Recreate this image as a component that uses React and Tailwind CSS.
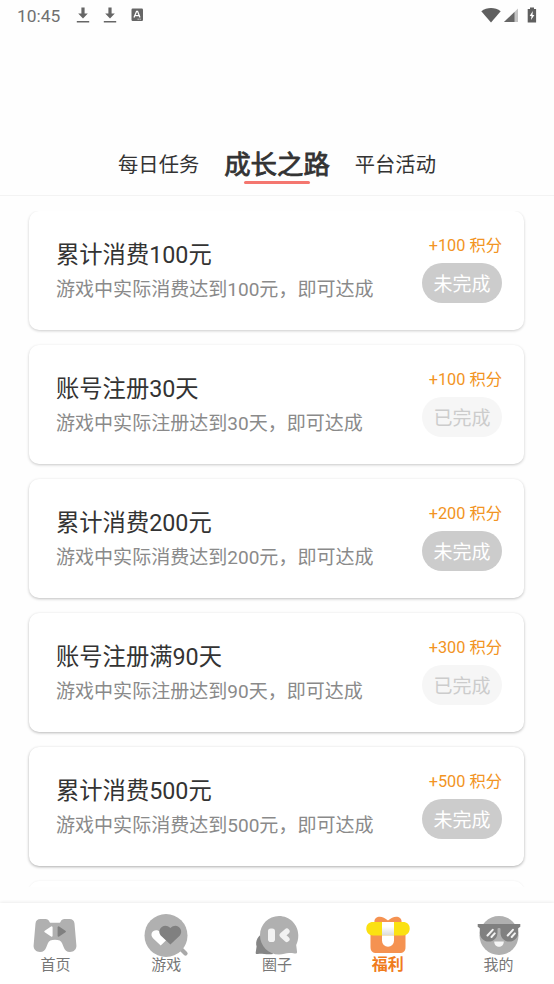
import { useState } from 'react';

const tabs = ['每日任务', '成长之路', '平台活动'];

const tasks = [
  { id: 1, title: '累计消费100元', desc: '游戏中实际消费达到100元，即可达成', points: 100, done: false, shadow: 'shadow-[0_1px_3px_rgba(0,0,0,0.2)]' },
  { id: 2, title: '账号注册30天', desc: '游戏中实际注册达到30天，即可达成', points: 100, done: true, shadow: 'shadow-[0_1px_3px_rgba(0,0,0,0.22)]' },
  { id: 3, title: '累计消费200元', desc: '游戏中实际消费达到200元，即可达成', points: 200, done: false, shadow: 'shadow-[0_1px_3px_rgba(0,0,0,0.25)]' },
  { id: 4, title: '账号注册满90天', desc: '游戏中实际注册达到90天，即可达成', points: 300, done: true, shadow: 'shadow-[0_1px_3px_rgba(0,0,0,0.28)]' },
  { id: 5, title: '累计消费500元', desc: '游戏中实际消费达到500元，即可达成', points: 500, done: false, shadow: 'shadow-[0_1px_3px_rgba(0,0,0,0.32)]' },
];

const DownloadIcon = () => (
  <svg width="14" height="18" viewBox="0 0 14 18" fill="#666">
    <path d="M5.4 0.5h3.2v6h3.2L7 11.6 2.2 6.500h3.200z" />
    <path d="M0.800 14h12.400v1.500H0.800z" />
  </svg>
);

const StatusBar = () => (
  <div className="flex h-8 shrink-0 items-center justify-between pl-[17px] pr-[17px] text-[#707070]">
    <div className="flex items-center">
      <span className="w-[59px] text-[17.4px] leading-8">10:45</span>
      <DownloadIcon />
      <span className="w-[13px]" />
      <DownloadIcon />
      <svg className="mb-[2px] ml-[14px]" width="13" height="14" viewBox="0 0 13 14">
        <rect x="0.5" y="0.5" width="11.5" height="12.5" rx="1.2" fill="#666" />
        <path d="M3 9.5 5.6 3.3h1L9 9.5M4 7.7h4" fill="none" stroke="#fff" strokeWidth="1.3" />
        <path d="M6.5 11.2h3.8" stroke="#ddd" strokeWidth="0.9" strokeDasharray="1.4 0.6" />
      </svg>
    </div>
    <div className="flex items-center pb-[2px]">
      <svg width="20" height="16" viewBox="0 0 20 16" fill="#5f5f5f">
        <path d="M0.300 4.300C6 0 14 0 19.700 4.300L10 15.500z" />
      </svg>
      <svg className="ml-[3px]" width="14" height="15" viewBox="0 0 14 15">
        <path d="M0 14 14 0.5V14z" fill="#c4c4c4" />
        <path d="M0 14 10.500 3.900V14z" fill="#666" />
      </svg>
      <svg className="ml-[9px]" width="10" height="16" viewBox="0 0 10 16">
        <path d="M3 0.5h4v1.400h2.100v13.600H0.700V1.900H3z" fill="#5f5f5f" />
        <path d="M5.800 4 2.700 9.100h1.800L4 13l3.400-5H5.500z" fill="#fff" />
      </svg>
    </div>
  </div>
);

const TaskCard = ({ task }) => (
  <div
    className={`flex h-[119px] shrink-0 justify-between rounded-[10px] bg-white pl-[27px] pr-[22px] ${task.shadow}`}
  >
    <div className="pt-[27px]">
      <h3 className="text-[23.3px] leading-[34px] text-[#333]">{task.title}</h3>
      <p className="mt-px text-[19.05px] leading-[34px] text-[#8a8a8a]">{task.desc}</p>
    </div>
    <div className="flex flex-col items-end pt-[23px]">
      <span className="text-[16.3px] leading-[24px] text-[#f29423]">+{task.points} 积分</span>
      <button
        type="button"
        className={`mt-[5px] h-10 w-20 rounded-full pt-px text-[19px] leading-[41px] ${
          task.done ? 'bg-[#f6f6f6] text-[#ccc]' : 'bg-[#ccc] text-white'
        }`}
      >
        {task.done ? '已完成' : '未完成'}
      </button>
    </div>
  </div>
);

const HomeIcon = () => (
  <svg width="46" height="44" viewBox="0 0 46 44">
    <path
      d="M8.5 5h5c2 0 3.2.9 3.8 2.6.3.9.8 1.2 1.6 1.2h8.2c.8 0 1.3-.3 1.6-1.2C29.300 5.900 30.500 5 32.500 5h5c3 0 4.700 1.600 5 4.500L44.400 31.500c.3 3.800-2.600 6.400-6.400 6.400-3.400 0-5.200-1.500-6.300-4.700l-1.500-3.800c-1-2.500-3.400-3.600-7.200-3.600s-6.200 1.100-7.200 3.600l-1.500 3.800C13.200 36.400 11.400 37.900 8 37.900c-3.800 0-6.700-2.600-6.400-6.400L3.500 9.500C3.800 6.600 5.500 5 8.500 5z"
      fill="#b0b0b0"
    />
    <path d="M19.600 13.300v8.400L13.300 17.500z" fill="#fff" stroke="#fff" strokeWidth="2" strokeLinejoin="round" />
    <path d="M26.600 13.300v8.400L32.900 17.500z" fill="#808080" stroke="#808080" strokeWidth="2" strokeLinejoin="round" />
  </svg>
);

const GameIcon = () => (
  <svg width="46" height="44" viewBox="0 0 46 44">
    <path d="M36 33l6.500 6.500" stroke="#a9a9a9" strokeWidth="4.200" strokeLinecap="round" />
    <circle cx="23" cy="21.500" r="21.500" fill="#b0b0b0" />
    <path d="M17.700 31.500 10 24.200c-4.500-5 2-11.300 7.700-5.800 5.500-5.500 12 .8 7.500 5.800z" fill="#fff" />
    <path d="M27.400 30.500 17.700 21.400C13.200 15.500 21 7.700 27.400 14c6.200-6.300 14 1.500 9.500 7.400z" fill="#808080" />
  </svg>
);

const CircleIcon = () => (
  <svg width="46" height="44" viewBox="0 0 46 44">
    <path d="M11 18C4 21 1 27 2.600 32.500L1.700 38.400c-.2 1.500.8 2 2.300 1.500 3-.8 8 .8 15 .1z" fill="#858585" />
    <path
      d="M25 2C14.500 2 6 10.500 6 21.200S14.500 40.500 25 40.500c4 0 7-1.200 10-1.500 3-.3 5 .5 6.500.5 1.200 0 1.700-.6 1.500-2l-.8-6.500c1.400-3 2.100-6 2.100-9.800C44.300 10.500 35.500 2 25 2z"
      fill="#b0b0b0"
    />
    <rect x="14" y="14.500" width="7" height="13.500" rx="2.800" fill="#f2f2f2" />
    <path d="M32.800 17.300 28.400 21.200l4.400 4" fill="none" stroke="#f2f2f2" strokeWidth="5.600" strokeLinecap="round" strokeLinejoin="round" />
  </svg>
);

const GiftIcon = () => (
  <svg width="46" height="44" viewBox="0 0 46 44">
    <defs>
      <linearGradient id="ribbon" x1="0" y1="0" x2="0" y2="1">
        <stop offset="0.350" stopColor="#fff" />
        <stop offset="1" stopColor="#d9d9d9" />
      </linearGradient>
    </defs>
    <path d="M10 10C7 3 16-.500 23 6.600 30-.500 39 3 36 10z" fill="#f59251" />
    <path d="M5.500 20h35v13c0 4-2 6-6 6h-23c-4 0-6-2-6-6z" fill="#f59251" />
    <path d="M8 8h30c4 0 6.700 2.600 6.700 6.500S42 21.500 38 21.500H8c-4 0-6.700-3.100-6.700-7S4 8 8 8z" fill="#fbe112" />
    <path d="M17 8h12v13.500H17z" fill="url(#ribbon)" />
    <path d="M17 21.500h12v5.200a6 6 0 0 1-12 0z" fill="#fff" />
  </svg>
);

const MineIcon = () => (
  <svg width="46" height="44" viewBox="0 0 46 44">
    <circle cx="23" cy="21.500" r="19.500" fill="#b0b0b0" />
    <path
      d="M1.700 10h42.600v2.800l-2.100 1.400v4.500c0 5-3.800 8.800-8.900 8.800s-8.800-3.700-8.800-8.800V15c0-1.300-3-1.300-3 0v3.700c0 5.100-3.700 8.800-8.800 8.800s-8.900-3.800-8.900-8.800v-4.500l-2.100-1.400V10z"
      fill="#808080"
    />
    <path
      d="M11.500 21.500l5.200-5.700M15.500 23l3.200-3.600M31.700 21.500l5.200-5.700M35.700 23l3.200-3.600"
      stroke="#f2f2f2"
      strokeWidth="2"
      strokeLinecap="round"
    />
    <path d="M18.200 27.500h9.600c0 7-9.600 7-9.600 0z" fill="#f5f5f5" />
  </svg>
);

const navItems = [
  { label: '首页', icon: HomeIcon },
  { label: '游戏', icon: GameIcon },
  { label: '圈子', icon: CircleIcon },
  { label: '福利', icon: GiftIcon },
  { label: '我的', icon: MineIcon },
];

const App = () => {
  const [activeTab, setActiveTab] = useState('成长之路');
  const [activeNav, setActiveNav] = useState('福利');

  return (
    <div className="flex h-[984px] w-[554px] flex-col overflow-hidden bg-[#fefefe] font-['Roboto','Noto_Sans_CJK_SC',sans-serif]">
      <StatusBar />

      {/* Tabs */}
      <div className="flex h-[164px] shrink-0 items-end justify-center gap-[25px] border-b border-[#f3f3f3] pb-[11px]">
        {tabs.map((tab) => (
          <button
            key={tab}
            type="button"
            onClick={() => setActiveTab(tab)}
            className="flex flex-col items-center text-[#333]"
          >
            <span
              className={
                tab === activeTab
                  ? 'pt-[2px] text-[26.4px] leading-[32px] [-webkit-text-stroke:0.8px_#333]'
                  : 'pt-[2px] text-[20.3px] leading-[32px]'
              }
            >
              {tab}
            </span>
            <span
              className={`h-[3px] w-[66px] rounded-full ${tab === activeTab ? 'bg-[#f4766f]' : 'bg-transparent'}`}
            />
          </button>
        ))}
      </div>

      {/* Task list */}
      <div className="mb-[16px] mt-[15px] flex min-h-0 flex-1 flex-col gap-[15px] overflow-hidden pl-[29px] pr-[30px]">
        {tasks.map((task) => (
          <TaskCard key={task.id} task={task} />
        ))}
        <div className="h-[119px] shrink-0 rounded-[10px] bg-white shadow-[0_0_2px_rgba(0,0,0,0.08)]" />
      </div>

      {/* Bottom navigation */}
      <nav className="z-10 grid h-[81px] shrink-0 grid-cols-5 bg-white shadow-[0_-1px_3px_rgba(0,0,0,0.07)]">
        {navItems.map(({ label, icon: Icon }) => (
          <button
            key={label}
            type="button"
            onClick={() => setActiveNav(label)}
            className="flex flex-col items-center pt-[11px]"
          >
            <Icon />
            <span
              className={
                label === activeNav
                  ? '-mt-[3px] text-[16px] font-bold leading-[20px] text-[#f07c1c]'
                  : '-mt-[3px] text-[15px] leading-[20px] text-[#777]'
              }
            >
              {label}
            </span>
          </button>
        ))}
      </nav>
    </div>
  );
};

export default App;
